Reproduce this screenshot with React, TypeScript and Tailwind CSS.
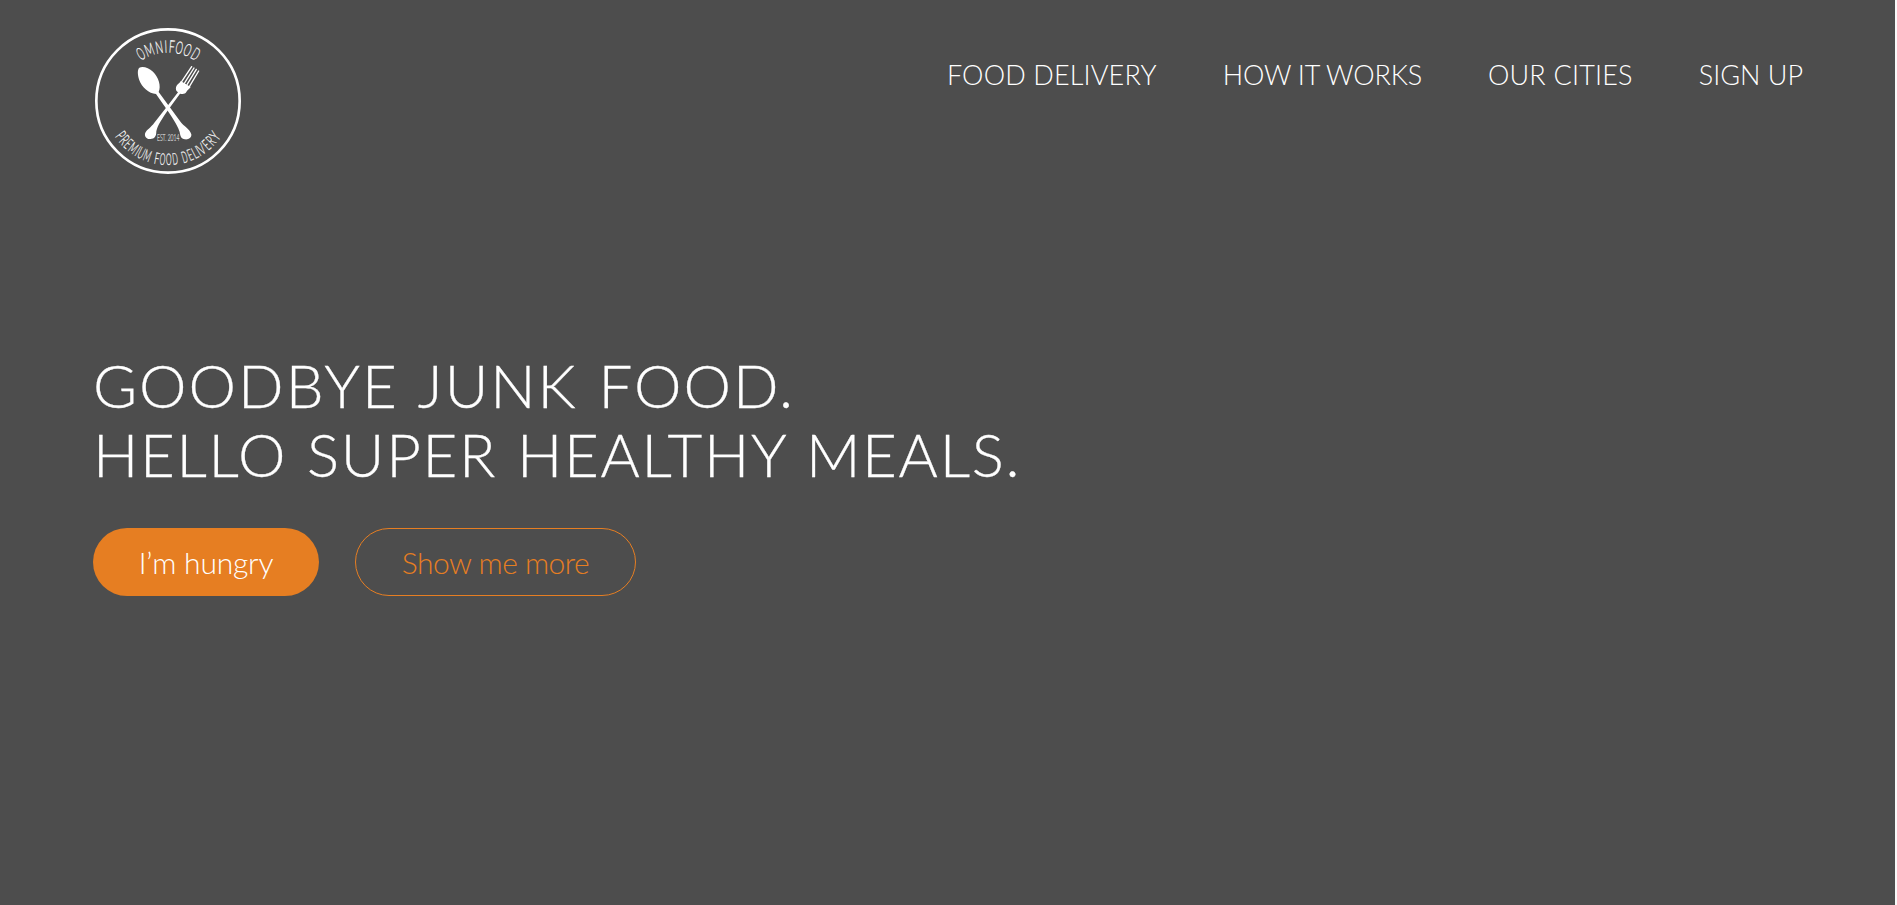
type Glyph = { char: string; angle: number; width: number };

const TOP: Glyph[] = [
  { char: "O", angle: -30, width: 18 },
  { char: "M", angle: -20, width: 24 },
  { char: "N", angle: -9.5, width: 19 },
  { char: "I", angle: -2.2, width: 5 },
  { char: "F", angle: 4, width: 14 },
  { char: "O", angle: 12, width: 19 },
  { char: "O", angle: 21, width: 19 },
  { char: "D", angle: 30.5, width: 18 },
];

const BOTTOM: Glyph[] = [
  { char: "P", angle: 54, width: 12 },
  { char: "R", angle: 48.3, width: 13 },
  { char: "E", angle: 42.8, width: 11 },
  { char: "M", angle: 36.3, width: 18 },
  { char: "I", angle: 31.2, width: 4 },
  { char: "U", angle: 27, width: 14 },
  { char: "M", angle: 20.5, width: 18 },
  { char: "F", angle: 10.8, width: 11 },
  { char: "O", angle: 5.3, width: 14 },
  { char: "O", angle: -0.8, width: 14 },
  { char: "D", angle: -7, width: 13 },
  { char: "D", angle: -16.5, width: 13 },
  { char: "E", angle: -22.3, width: 11 },
  { char: "L", angle: -27.4, width: 10 },
  { char: "I", angle: -31, width: 4 },
  { char: "V", angle: -35, width: 15 },
  { char: "E", angle: -41, width: 11 },
  { char: "R", angle: -47, width: 13 },
  { char: "Y", angle: -53.5, width: 15 },
];

const RATIO: Record<string, number> = {
  O: 0.8, M: 0.92, N: 0.75, I: 0.27, F: 0.54, D: 0.74, P: 0.58,
  R: 0.6, E: 0.57, U: 0.71, L: 0.46, V: 0.66, Y: 0.62,
};

function Arc({ glyphs, offset, size }: { glyphs: Glyph[]; offset: number; size: number }) {
  return (
    <g fontSize={size} textAnchor="middle" fill="#fff" stroke="#fff" strokeWidth="0.2">
      {glyphs.map((g, i) => (
        <text
          key={i}
          vectorEffect="non-scaling-stroke"
          transform={`translate(252 255) rotate(${g.angle}) translate(0 ${offset}) scale(${((g.width + 3) / (RATIO[g.char] * size)).toFixed(3)} 1)`}
        >
          {g.char}
        </text>
      ))}
    </g>
  );
}

function Logo() {
  return (
    <svg className="ml-px mt-7 size-[146px]" viewBox="33 36 438 438" fill="none">
      <circle cx="252" cy="255" r="215" stroke="#fff" strokeWidth="8" />
      <Arc glyphs={TOP} offset={-145} size={52} />
      <Arc glyphs={BOTTOM} offset={192} size={48} />
      <text x="219" y="374" fontSize="26" textLength="67" lengthAdjust="spacingAndGlyphs" fill="#ddd" stroke="#ddd" strokeWidth="0.6">EST. 2014</text>
      <g fill="#fff">
        <path d="M166 155C176 149 194 155 207 167C224 183 232 211 224 228L257 273L290 318C299 330 318 340 322 355C323 366 314 371 303 370C291 369 289 360 287 348C283 334 274 318 249 281L216 234C195 234 173 213 166 193C160 176 160 160 166 155Z" />
        <path d="M276 214C279 204 286 203 290 195L320 213C317 219 309 222 307 228C303 235 296 234 288 233L255 278C234 308 221 327 217 346C217 362 211 369 199 369C186 370 180 359 184 350C188 341 201 334 211 320L248 273L282 229C276 226 275 220 276 214Z" />
      </g>
      <g stroke="#fff" strokeWidth="4" strokeLinecap="round">
        <path d="M293 197L323 152M301 202L330 156M309 206L337 160M316 212L344 165" />
      </g>
    </svg>
  );
}

export default function App() {
  return (
    <div className="flex h-[905px] w-full bg-[#f8f8f8] font-['Lato','Liberation_Sans',sans-serif] font-light">
      <div className="mr-0.5 grow bg-[#4d4d4d] text-white">
        <header className="flex h-[200px] justify-between pl-[94px] pr-[92px]">
          <Logo />
          <nav className="mt-[57px] flex gap-[66px] text-[27px] leading-9">
            <a className="tracking-[0.15px]">FOOD DELIVERY</a>
            <a className="tracking-[-0.15px]">HOW IT WORKS</a>
            <a className="tracking-[0.2px]">OUR CITIES</a>
            <a>SIGN UP</a>
          </nav>
        </header>
        <main className="pl-[93px] pt-[150.5px]">
          <h1 className="text-[60px] leading-[69px] tracking-[1.7px] [-webkit-text-stroke:0.3px_white]">
            <span className="block tracking-[2px] [word-spacing:2.5px]">GOODBYE JUNK FOOD.</span>
            <span className="block [word-spacing:1.8px]">HELLO SUPER HEALTHY MEALS.</span>
          </h1>
          <div className="mt-[39.5px] flex gap-9 text-[30px]">
            <a className="flex h-[68px] w-[226px] items-center justify-center rounded-full bg-[#e67e22] tracking-[-0.2px]">I’m hungry</a>
            <a className="flex h-[68px] w-[281px] items-center justify-center rounded-full border border-[#e67e22] tracking-[-0.5px] text-[#e67e22]">Show me more</a>
          </div>
        </main>
      </div>
    </div>
  );
}
